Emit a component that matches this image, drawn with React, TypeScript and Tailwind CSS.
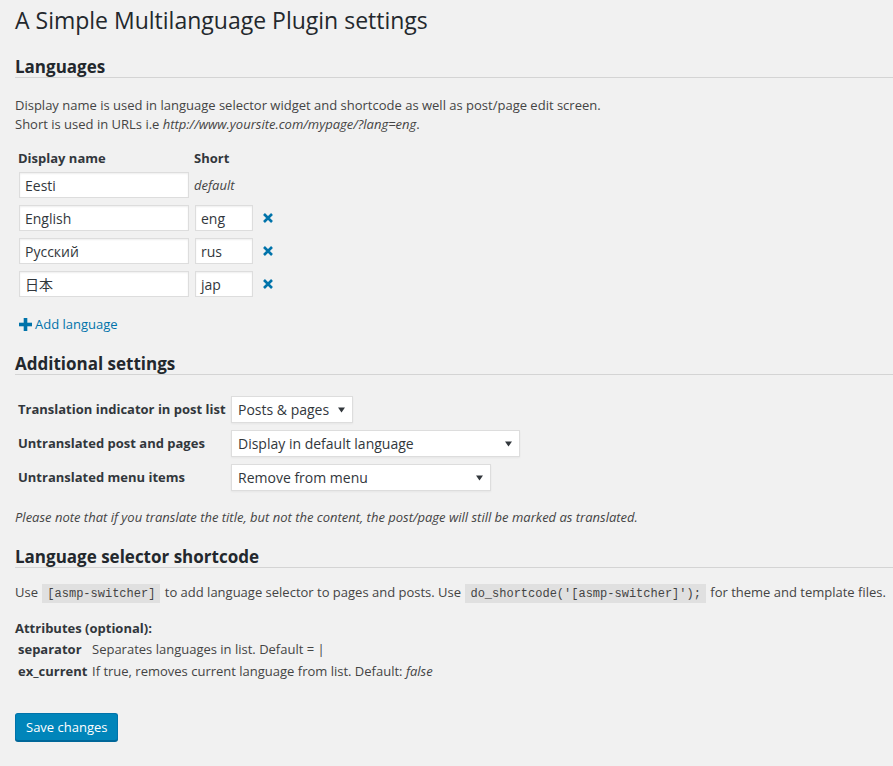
import React from "react";

function XIcon() {
  return (
    <svg width="10" height="10" viewBox="0 0 10 10" className="block">
      <path d="M1 1 L9 9 M9 1 L1 9" stroke="#0073aa" strokeWidth="2.6" fill="none" />
    </svg>
  );
}

function PlusIcon() {
  return (
    <svg width="13" height="13" viewBox="0 0 13 13" className="block">
      <rect x="0" y="4.7" width="13" height="3.6" fill="#0073aa" />
      <rect x="4.7" y="0" width="3.6" height="13" fill="#0073aa" />
    </svg>
  );
}

function Arrow() {
  return (
    <svg width="7" height="6" viewBox="0 0 7 6" className="block">
      <path d="M0 0.5 L7 0.5 L3.5 5.5 Z" fill="#32373c" />
    </svg>
  );
}

function Input({ value, w }: { value: string; w: string }) {
  return (
    <div
      className={`${w} h-[26px] bg-white border border-[#ddd] shadow-[inset_0_1px_2px_rgba(0,0,0,0.07)] flex items-center px-[5px] text-[14px] text-[#32373c] font-['Open_Sans','Noto_Sans_CJK_JP',sans-serif]`}
    >
      {value}
    </div>
  );
}

function Select({ value, w }: { value: string; w: string }) {
  return (
    <div
      className={`${w} h-[27px] bg-white border border-[#ddd] shadow-[0_1px_2px_rgba(0,0,0,0.05)] flex items-center justify-between pl-[6px] pr-[7px] text-[14px] text-[#32373c]`}
    >
      <span>{value}</span>
      <Arrow />
    </div>
  );
}

function H2({ children, mt }: { children: React.ReactNode; mt: string }) {
  return (
    <h2
      className={`${mt} text-[17px] leading-[20px] font-bold text-[#23282d] border-b border-[#d4d4d4]`}
    >
      {children}
    </h2>
  );
}

function Code({ children }: { children: React.ReactNode }) {
  return (
    <code className="mx-[1px] bg-black/[0.07] pt-[3px] pb-[2px] px-[5px] text-[12px] font-['Liberation_Mono',monospace] text-[#444]">
      {children}
    </code>
  );
}

export default function App() {
  const langs = [
    { name: "Eesti", short: null },
    { name: "English", short: "eng" },
    { name: "Русский", short: "rus" },
    { name: "日本", short: "jap" },
  ];
  return (
    <div className="min-h-[766px] bg-[#f1f1f1] pl-[15px] text-[13px] leading-[19px] text-[#444] font-['Open_Sans',sans-serif]">
      <h1 className="pt-[6px] text-[23px] leading-[29px] font-normal text-[#23282d]">
        A Simple Multilanguage Plugin settings
      </h1>

      <H2 mt="mt-[22px]">Languages</H2>

      <p className="mt-[18px]">
        Display name is used in language selector widget and shortcode as well as post/page edit screen.
        <br />
        Short is used in URLs i.e <em>http://www.yoursite.com/mypage/?lang=eng</em>.
      </p>

      <div className="mt-[15px] ml-[3px]">
        <div className="grid grid-cols-[176px_1fr] font-bold text-[#32373c]">
          <div>Display name</div>
          <div>Short</div>
        </div>
        <div className="mt-[4px] flex flex-col gap-[7px]">
          {langs.map((l) => (
            <div key={l.name} className="grid grid-cols-[176px_1fr] items-center">
              <div className="pl-[1px]">
                <Input value={l.name} w="w-[170px]" />
              </div>
              {l.short === null ? (
                <div className="italic">default</div>
              ) : (
                <div className="flex items-center pl-[1px]">
                  <Input value={l.short} w="w-[58px]" />
                  <div className="ml-[10px]">
                    <XIcon />
                  </div>
                </div>
              )}
            </div>
          ))}
        </div>
        <div className="mt-[18px] flex items-center gap-[3px] text-[#0073aa] ml-[1px]">
          <PlusIcon />
          <span>Add language</span>
        </div>
      </div>

      <H2 mt="mt-[20px]">Additional settings</H2>

      <div className="mt-[21px] ml-[3px] flex flex-col gap-[7px]">
        {[
          { label: "Translation indicator in post list", value: "Posts & pages", w: "w-[122px]" },
          { label: "Untranslated post and pages", value: "Display in default language", w: "w-[289px]" },
          { label: "Untranslated menu items", value: "Remove from menu", w: "w-[260px]" },
        ].map((r) => (
          <div key={r.label} className="grid grid-cols-[213px_1fr] items-center">
            <div className="font-bold text-[#32373c]">{r.label}</div>
            <Select value={r.value} w={r.w} />
          </div>
        ))}
      </div>

      <p className="mt-[17px] italic">
        Please note that if you translate the title, but not the content, the post/page will still be marked as translated.
      </p>

      <H2 mt="mt-[20px]">Language selector shortcode</H2>

      <p className="mt-[15px]">
        Use <Code>[asmp-switcher]</Code> to add language selector to pages and posts. Use{" "}
        <Code>do_shortcode('[asmp-switcher]');</Code> for theme and template files.
      </p>

      <div className="mt-[15px] font-bold text-[#32373c]">Attributes (optional):</div>
      <div className="ml-[3px]">
        <div className="grid grid-cols-[74px_1fr] h-[22px] items-center">
          <div className="font-bold text-[#32373c]">separator</div>
          <div>Separates languages in list. Default = |</div>
        </div>
        <div className="grid grid-cols-[74px_1fr] h-[22px] items-center">
          <div className="font-bold text-[#32373c]">ex_current</div>
          <div>
            If true, removes current language from list. Default: <em>false</em>
          </div>
        </div>
      </div>

      <button className="mt-[31px] h-[28px] px-[10px] rounded-[3px] bg-[#0085ba] border border-[#0073aa] border-b-[#006799] shadow-[0_1px_0_#006799] text-white text-[13px] leading-[26px]">
        Save changes
      </button>
    </div>
  );
}
